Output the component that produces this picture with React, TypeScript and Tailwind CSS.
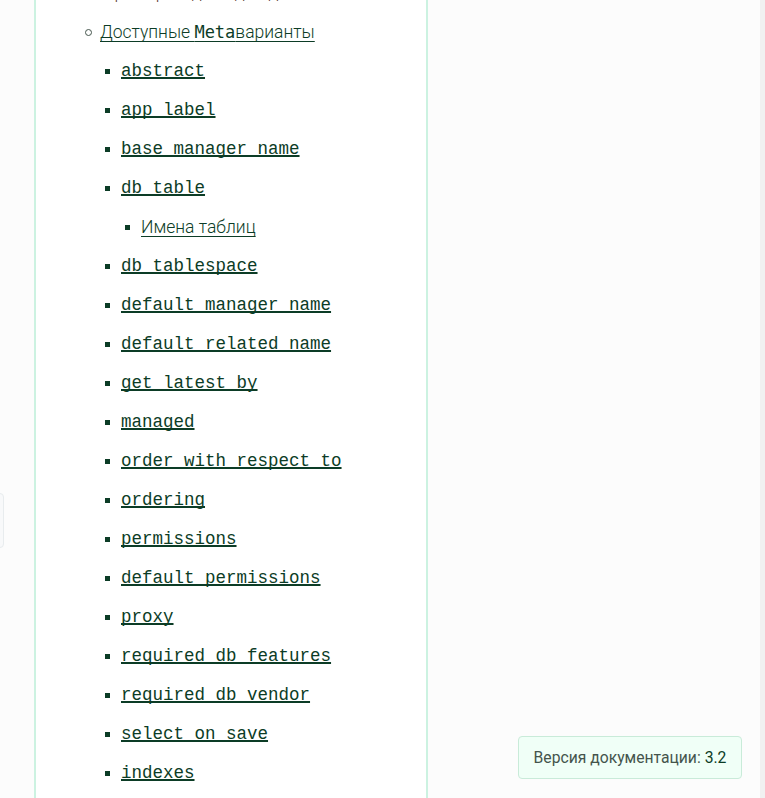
import React from 'react'

const metaOptions: { name: string; children?: string[] }[] = [
  { name: 'abstract' },
  { name: 'app_label' },
  { name: 'base_manager_name' },
  { name: 'db_table', children: ['Имена таблиц'] },
  { name: 'db_tablespace' },
  { name: 'default_manager_name' },
  { name: 'default_related_name' },
  { name: 'get_latest_by' },
  { name: 'managed' },
  { name: 'order_with_respect_to' },
  { name: 'ordering' },
  { name: 'permissions' },
  { name: 'default_permissions' },
  { name: 'proxy' },
  { name: 'required_db_features' },
  { name: 'required_db_vendor' },
  { name: 'select_on_save' },
  { name: 'indexes' },
]

const sans = "font-['Roboto','Noto_Sans',sans-serif] font-light"
const mono = "font-['Liberation_Mono','DejaVu_Sans_Mono',monospace]"

function Bullet({ round }: { round?: boolean }) {
  if (round) {
    return <span className="inline-block w-[7px] h-[7px] rounded-full border border-[#44554c] mr-[8px]" />
  }
  return <span className="inline-block w-[5px] h-[5px] bg-[#0c3c26] mr-[11px]" />
}

export default function App() {
  return (
    <div className="h-[798px] w-[765px] overflow-hidden flex bg-[#fcfcfc] relative">
      {/* left gutter */}
      <div className="w-[34px] shrink-0 relative">
        <div className="absolute left-[-10px] top-[493px] w-[14px] h-[55px] rounded bg-[#f8f9fa] border border-[#e8ecee]" />
      </div>

      {/* main column */}
      <div className="w-[394px] shrink-0 bg-white border-x-2 border-[#ccf2e1] overflow-hidden">
        <div className={`${sans} text-[17.5px] text-[#0c3c26] mt-[-19px] pl-[66px] h-[22px] leading-[22px] whitespace-nowrap`}>
          <span className="text-[#5a3b30]">Пример модели для дополнений</span>
        </div>
        <ul className="pl-[49px] pt-[10px]">
          <li>
            <div className="h-[39px] flex items-center">
              <Bullet round />
              <a className={`${sans} text-[17.5px] text-[#0c3c26] underline underline-offset-[3px]`}>
                Доступные <span className="font-['DejaVu_Sans_Mono',monospace] font-normal text-[17px]">Meta</span>варианты
              </a>
            </div>
            <ul className="pl-[20px]">
              {metaOptions.map((opt) => (
                <li key={opt.name}>
                  <div className="h-[39px] flex items-center">
                    <Bullet />
                    <a className={`${mono} text-[17.5px] text-[#0c3c26] underline underline-offset-[1px] decoration-[1.5px] [text-decoration-skip-ink:none]`}>
                      {opt.name}
                    </a>
                  </div>
                  {opt.children && (
                    <ul className="pl-[20px]">
                      {opt.children.map((c) => (
                        <li key={c} className="h-[39px] flex items-center">
                          <Bullet />
                          <a className={`${sans} text-[17.5px] text-[#0c3c26] underline underline-offset-[3px]`}>{c}</a>
                        </li>
                      ))}
                    </ul>
                  )}
                </li>
              ))}
            </ul>
          </li>
        </ul>
      </div>

      {/* right area */}
      <div className="flex-1" />
      <div className="w-[5px] shrink-0 bg-[#f1f1f1]" />

      {/* version badge */}
      <div className={`absolute left-[518px] top-[736px] w-[224px] h-[43px] rounded-[4px] border border-[#c9ebd9] bg-[#f0fff7] flex items-center justify-center ${"font-['Roboto','Noto_Sans',sans-serif]"} text-[15.7px] text-[#44544c]`}>
        Версия документации:&nbsp;<span className="text-[#0c3c26] font-normal">3.2</span>
      </div>
    </div>
  )
}
